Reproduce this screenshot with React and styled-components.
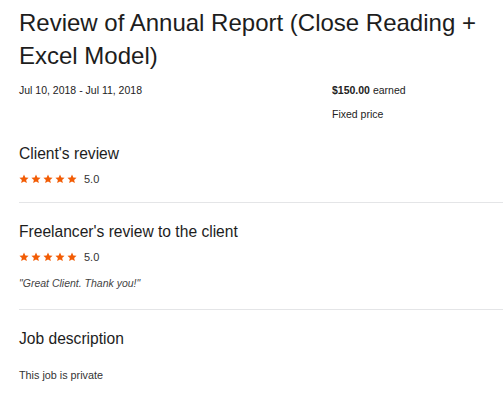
import React from "react"
import styled, { createGlobalStyle } from "styled-components"

const GlobalStyle = createGlobalStyle`
  body {
    margin: 0;
    background: #fff;
    font-family: "Liberation Sans", Arial, sans-serif;
    color: #222;
  }
`

const Page = styled.div`
  padding: 6px 0 0 19px;
`
const Title = styled.h1`
  margin: 0;
  font-size: 24px;
  font-weight: 400;
  line-height: 33px;
  color: #1d1d1d;
  max-width: 475px;
`
const Meta = styled.div`
  display: grid;
  grid-template-columns: 313px 1fr;
  margin: 12px 0 5px;
  font-size: 10.5px;
  color: #222;
`
const MetaCol = styled.div`
  display: flex;
  flex-direction: column;
  gap: 12px;
`
const Strong = styled.b`
  font-weight: 700;
`
const Section = styled.section`
  padding: 19px 0 17px;
  border-bottom: ${(p) => (p.$last ? "none" : "1px solid #e4e5e7")};
`
const Heading = styled.h2`
  margin: 0;
  font-size: 15.6px;
  font-weight: 400;
  line-height: 20px;
  color: #1d1d1d;
`
const Rating = styled.div`
  display: flex;
  align-items: center;
  gap: 7px;
  margin-top: 9px;
  font-size: 11px;
  color: #333;
`
const Stars = styled.span`
  display: inline-flex;
  gap: 2px;
`
const Quote = styled.p`
  margin: 14px 0 3px;
  font-size: 10.5px;
  font-style: italic;
  color: #444;
`
const Body = styled.p`
  margin: 20px 0 0;
  font-size: 10.8px;
  color: #333;
`

function Star() {
  return (
    <svg width="10" height="10" viewBox="0 0 24 24">
      <path
        fill="#f25c05"
        d="M12 1l3.2 7.2 7.8.7-5.9 5.2 1.8 7.7L12 17.8l-6.9 4 1.8-7.7L1 8.9l7.8-.7z"
      />
    </svg>
  )
}

function StarRating({ value }) {
  return (
    <Rating>
      <Stars>
        {[0, 1, 2, 3, 4].map((i) => (
          <Star key={i} />
        ))}
      </Stars>
      {value}
    </Rating>
  )
}

export default function App() {
  return (
    <Page>
      <GlobalStyle />
      <Title>Review of Annual Report (Close Reading + Excel Model)</Title>
      <Meta>
        <MetaCol>
          <span>Jul 10, 2018 - Jul 11, 2018</span>
        </MetaCol>
        <MetaCol>
          <span>
            <Strong>$150.00</Strong> earned
          </span>
          <span>Fixed price</span>
        </MetaCol>
      </Meta>
      <Section>
        <Heading>Client's review</Heading>
        <StarRating value="5.0" />
      </Section>
      <Section>
        <Heading>Freelancer's review to the client</Heading>
        <StarRating value="5.0" />
        <Quote>"Great Client. Thank you!"</Quote>
      </Section>
      <Section $last>
        <Heading>Job description</Heading>
        <Body>This job is private</Body>
      </Section>
    </Page>
  )
}
